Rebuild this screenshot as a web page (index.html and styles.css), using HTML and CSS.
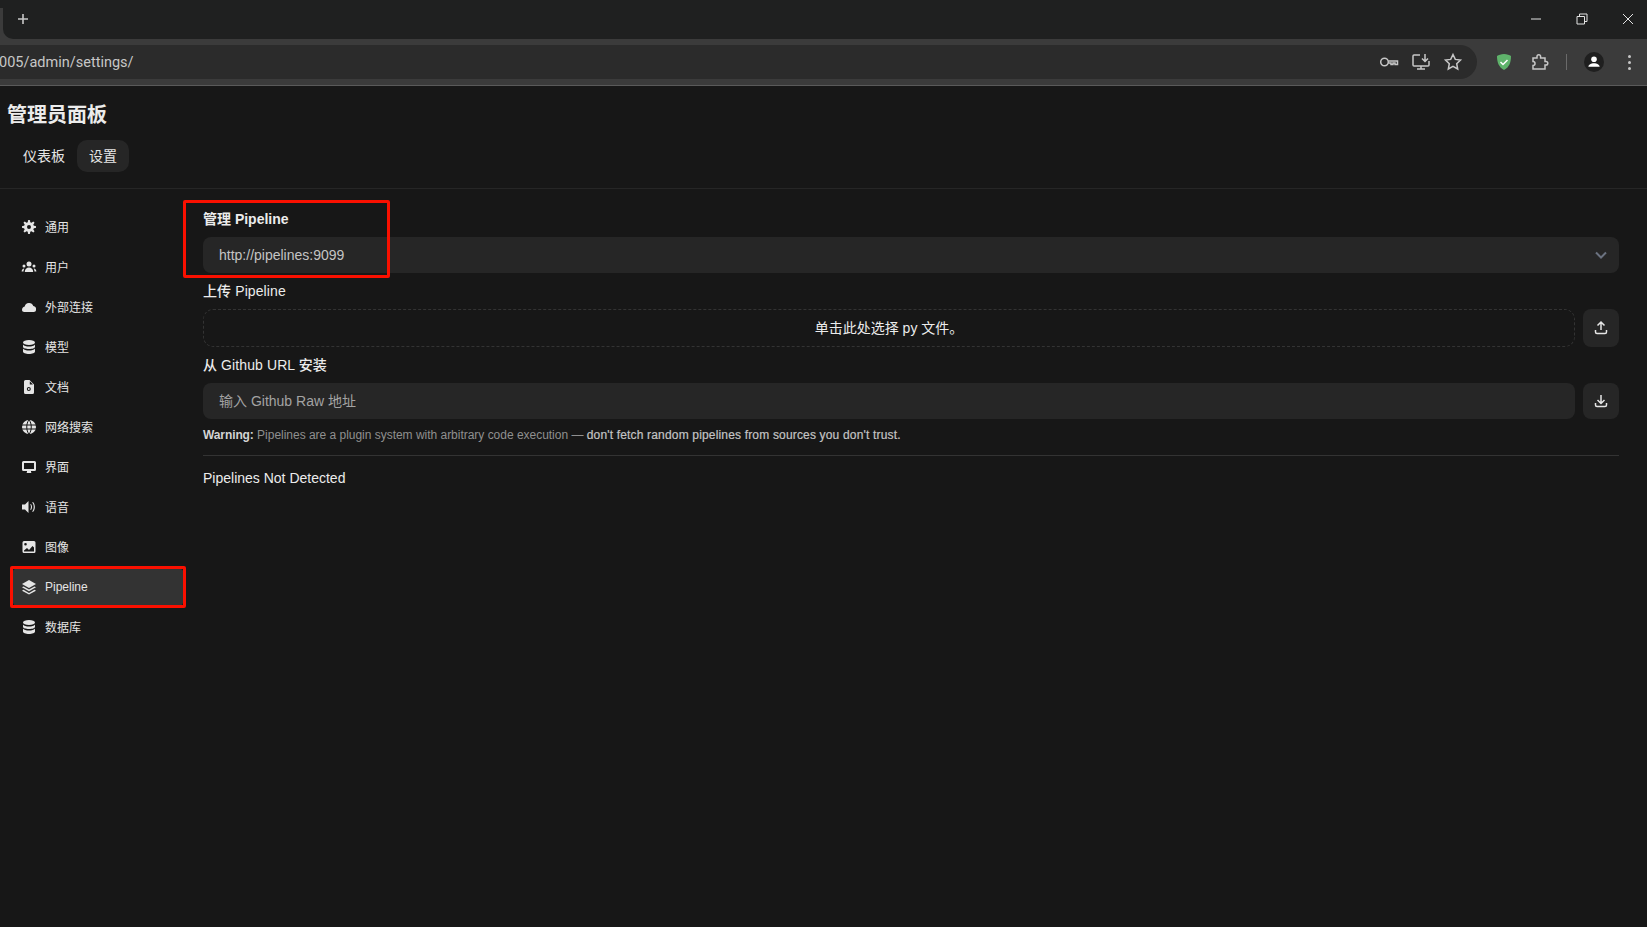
FILE: index.html
```html
<!DOCTYPE html>
<html lang="zh-CN">
<head>
  <meta charset="UTF-8">
  <title>管理员面板</title>
  <link rel="stylesheet" href="styles.css">
</head>
<body>
  <!-- browser frame -->
  <div class="tabstrip">
    <div class="tab-edge"></div>
    <svg class="new-tab" viewBox="0 0 12 12"><path d="M6 1v10M1 6h10"/></svg>
    <div class="win-buttons">
      <svg viewBox="0 0 12 12"><path d="M1 6h10"/></svg>
      <svg viewBox="0 0 12 12"><path d="M1 3.500h7.500V11H1zM3.500 3.500V1H11v7.500H8.500"/></svg>
      <svg viewBox="0 0 12 12"><path d="M1 1l10 10M11 1L1 11"/></svg>
    </div>
  </div>
  <div class="toolbar">
    <div class="omnibox">
      <span class="url">005/admin/settings/</span>
      <svg class="omni-icon" viewBox="0 0 20 20"><circle cx="5.500" cy="10" r="3.800"/><path d="M9.300 9h9.200v3.500H16V11h-2v1.500h-2V11H9.300"/></svg>
      <svg class="omni-icon" viewBox="0 0 20 20"><path d="M9 3H3a1 1 0 0 0-1 1v9a1 1 0 0 0 1 1h14a1 1 0 0 0 1-1V9M6 17h8M10 14v3M14 2v7M11 6.500L14 9.500l3-3"/></svg>
      <svg class="omni-icon" viewBox="0 0 20 20"><path d="M10 2.500l2.300 4.900 5.200.7-3.800 3.600 1 5.300-4.700-2.600-4.700 2.600 1-5.300-3.800-3.600 5.200-.7z"/></svg>
    </div>
    <div class="ext-icons">
      <svg class="shield" viewBox="0 0 18 18"><path d="M9 1c3 0 5.500 1 7 2 0 6-1.500 11-7 14C3.500 14 2 9 2 3c1.500-1 4-2 7-2z" fill="#5fb36b"/><path d="M5.500 9l2.500 2.500 4.500-4.500" fill="none" stroke="#fff" stroke-width="1.500"/></svg>
      <svg class="puzzle" viewBox="0 0 18 18"><path d="M2 5h4V3.500a1.800 1.800 0 0 1 3.600 0V5H14v3.500h1a1.800 1.800 0 0 1 0 3.600h-1V16H2v-3.500a2 2 0 0 0 0-4z"/></svg>
      <span class="tool-sep"></span>
      <span class="avatar"><svg viewBox="0 0 20 20"><circle cx="10" cy="6.500" r="3.500"/><path d="M3 16c0-3 3.500-4.500 7-4.500s7 1.500 7 4.500z"/></svg></span>
      <span class="dots"><i></i><i></i><i></i></span>
    </div>
  </div>

  <div class="page">
    <header class="page-head">
      <h1>管理员面板</h1>
      <nav class="top-tabs">
        <span class="top-tab">仪表板</span>
        <span class="top-tab active">设置</span>
      </nav>
    </header>

    <div class="settings">
      <aside class="sidebar">
        <a class="side-item">
          <svg viewBox="0 0 16 16"><path fill-rule="evenodd" d="M6.955 1.450A.5.5 0 0 1 7.452 1h1.096a.5.5 0 0 1 .497.45l.17 1.699c.484.12.94.312 1.356.562l1.321-1.081a.5.5 0 0 1 .67.033l.774.775a.5.5 0 0 1 .034.67l-1.080 1.320c.25.417.44.873.561 1.357l1.699.17a.5.5 0 0 1 .45.497v1.096a.5.5 0 0 1-.45.497l-1.699.17c-.12.484-.312.94-.562 1.356l1.082 1.322a.5.5 0 0 1-.034.67l-.774.774a.5.5 0 0 1-.67.033l-1.322-1.080c-.416.25-.872.44-1.356.561l-.17 1.699a.5.5 0 0 1-.497.45H7.452a.5.5 0 0 1-.497-.45l-.17-1.699a4.973 4.973 0 0 1-1.356-.562L4.108 13.370a.5.5 0 0 1-.67-.033l-.774-.775a.5.5 0 0 1-.034-.67l1.080-1.320a4.971 4.971 0 0 1-.561-1.357l-1.699-.17A.5.5 0 0 1 1 8.548V7.452a.5.5 0 0 1 .45-.497l1.699-.17c.12-.484.312-.94.562-1.356L2.629 4.107a.5.5 0 0 1 .034-.67l.774-.774a.5.5 0 0 1 .67-.033L5.430 3.710a4.970 4.970 0 0 1 1.356-.561l.17-1.699ZM6 8a2 2 0 1 0 4 0 2 2 0 0 0-4 0Z"/></svg>
          通用
        </a>
        <a class="side-item">
          <svg viewBox="0 0 16 16"><circle cx="8" cy="5" r="2.500"/><circle cx="3" cy="7" r="1.500"/><circle cx="13" cy="7" r="1.500"/><path d="M3.800 13c0-2.800 1.900-4.500 4.200-4.500s4.200 1.700 4.200 4.500zM.6 12.500c0-1.700 1-3 2.700-3.100-.5.900-.8 2-.8 3.100zM15.400 12.500c0-1.700-1-3-2.700-3.100.5.900.8 2 .8 3.100z"/></svg>
          用户
        </a>
        <a class="side-item">
          <svg viewBox="0 0 16 16"><path d="M1 11a3.500 3.500 0 0 1 2.700-3.400 4.500 4.500 0 0 1 8.600-.6 3.500 3.500 0 0 1 2.700 4c0 1.200-1 2-2.200 2H3.200C2 13 1 12.200 1 11z"/></svg>
          外部连接
        </a>
        <a class="side-item">
          <svg viewBox="0 0 16 16"><ellipse cx="8" cy="3.500" rx="6" ry="2.500"/><path d="M2 5.500v2.200C2 9 4.700 10 8 10s6-1 6-2.300V5.500C13 6.900 10.700 7.500 8 7.500S3 6.900 2 5.500zM2 9.500v3C2 13.900 4.700 15 8 15s6-1.100 6-2.500v-3C13 10.900 10.700 11.500 8 11.500S3 10.900 2 9.500z"/></svg>
          模型
        </a>
        <a class="side-item">
          <svg viewBox="0 0 16 16"><path fill-rule="evenodd" d="M3 2.500A1.500 1.500 0 0 1 4.500 1h4L13 5.500v8a1.500 1.500 0 0 1-1.500 1.500h-7A1.500 1.500 0 0 1 3 13.500zM5.800 10a2 2 0 1 0 4 0 2 2 0 0 0-4 0zM6.900 10a.9.9 0 1 1 1.800 0 .9.9 0 0 1-1.800 0zM8.800 2.200v3.200H12z"/></svg>
          文档
        </a>
        <a class="side-item">
          <svg viewBox="0 0 16 16"><circle cx="8" cy="8" r="7"/><path class="cut" d="M1 6h14M1 10h14M8 1C5 4 5 12 8 15M8 1c3 3 3 11 0 14"/></svg>
          网络搜索
        </a>
        <a class="side-item">
          <svg viewBox="0 0 16 16"><path fill-rule="evenodd" d="M2.500 2h11A1.500 1.500 0 0 1 15 3.500v7a1.500 1.500 0 0 1-1.500 1.500H10v1.500l1 .5H5l1-.5V12H2.500A1.500 1.500 0 0 1 1 10.500v-7A1.500 1.500 0 0 1 2.500 2zM3 4v6h10V4z"/></svg>
          界面
        </a>
        <a class="side-item">
          <svg viewBox="0 0 16 16"><path d="M7.500 2v12L4 10.500H1v-5h3zM10 5c1.400 1.600 1.400 4.400 0 6l-.8-.6c1-1.300 1-3.500 0-4.800zM12 3c2.500 2.700 2.500 7.300 0 10l-.8-.6c2-2.300 2-6.500 0-8.800z"/></svg>
          语音
        </a>
        <a class="side-item">
          <svg viewBox="0 0 16 16"><path fill-rule="evenodd" d="M3 2h10a1.500 1.500 0 0 1 1.500 1.500v9A1.500 1.500 0 0 1 13 14H3a1.500 1.500 0 0 1-1.500-1.500v-9A1.500 1.500 0 0 1 3 2zM3 11.500v1h10V8.500l-1.500-1.500-3.500 4-2-2zM4.500 6.500a1.300 1.300 0 1 0 0-2.600 1.300 1.300 0 0 0 0 2.600z"/></svg>
          图像
        </a>
        <a class="side-item active">
          <svg viewBox="0 0 16 16"><path d="M8 1l7 4-7 4-7-4zM2.500 7.500L8 10.600l5.500-3.100L15 8.300l-7 4-7-4zM2.500 10.800L8 13.900l5.500-3.100 1.500.9-7 3.800-7-3.800z"/></svg>
          Pipeline
          <span class="mark mark-side"></span>
        </a>
        <a class="side-item">
          <svg viewBox="0 0 16 16"><ellipse cx="8" cy="3.500" rx="6" ry="2.500"/><path d="M2 5.500v2.200C2 9 4.700 10 8 10s6-1 6-2.300V5.500C13 6.900 10.700 7.500 8 7.500S3 6.900 2 5.500zM2 9.500v3C2 13.900 4.700 15 8 15s6-1.100 6-2.500v-3C13 10.900 10.700 11.500 8 11.500S3 10.900 2 9.500z"/></svg>
          数据库
        </a>
      </aside>

      <main class="content">
        <section class="field first">
          <label class="field-label strong">管理 Pipeline</label>
          <div class="select">
            <span>http://pipelines:9099</span>
            <svg viewBox="0 0 16 16"><path d="M3 5.500l5 5 5-5"/></svg>
          </div>
          <span class="mark mark-field"></span>
        </section>

        <section class="field">
          <label class="field-label">上传 Pipeline</label>
          <div class="row">
            <div class="dropzone">单击此处选择 py 文件。</div>
            <button class="icon-btn">
              <svg viewBox="0 0 16 16"><path d="M8 10V2.500M4.500 5.500L8 2l3.500 3.500M2.500 10v2a1.500 1.500 0 0 0 1.500 1.500h8a1.500 1.500 0 0 0 1.500-1.500v-2"/></svg>
            </button>
          </div>
        </section>

        <section class="field">
          <label class="field-label">从 Github URL 安装</label>
          <div class="row">
            <div class="text-input">输入 Github Raw 地址</div>
            <button class="icon-btn">
              <svg viewBox="0 0 16 16"><path d="M8 2v8M4.500 7L8 10.500 11.500 7M2.500 10v2a1.500 1.500 0 0 0 1.500 1.500h8a1.500 1.500 0 0 0 1.500-1.500v-2"/></svg>
            </button>
          </div>
          <p class="warning"><b>Warning:</b> <span>Pipelines are a plugin system with arbitrary code execution —</span> <em>don't fetch random pipelines from sources you don't trust.</em></p>
        </section>

        <hr class="rule">
        <div class="empty">Pipelines Not Detected</div>
      </main>
    </div>
  </div>
</body>
</html>
```

FILE: styles.css
```css
* {
  box-sizing: border-box;
}
html, body {
  height: 100%;
}
body {
  margin: 0;
  overflow: hidden;
  background-color: #171717;
  color: #ececec;
  font-family: "Liberation Sans", "Noto Sans CJK SC", sans-serif;
  display: flex;
  flex-direction: column;
}
svg {
  display: block;
}

/* browser frame */
.tabstrip {
  height: 39px;
  background-color: #1f2020;
  display: flex;
  align-items: center;
  flex-shrink: 0;
}
.tab-edge {
  width: 17px;
  height: 39px;
  background: linear-gradient(#1f2020 8px, #3b3b3b 8px);
}
.tab-edge::after {
  content: "";
  display: block;
  height: 39px;
  margin-left: 3px;
  background-color: #1f2020;
  border-bottom-left-radius: 10px;
}
.new-tab {
  width: 12px;
  height: 12px;
  margin-bottom: 2px;
  fill: none;
  stroke: #c7c7c7;
  stroke-width: 1.6;
}
.win-buttons {
  margin-left: auto;
  display: flex;
  gap: 34px;
  padding-right: 13px;
  margin-bottom: 2px;
}
.win-buttons svg {
  width: 12px;
  height: 12px;
  fill: none;
  stroke: #e3e3e3;
  stroke-width: 1;
}
.toolbar {
  height: 47px;
  padding-top: 6px;
  background-color: #3b3b3b;
  border-bottom: 1px solid #5a5a5a;
  display: flex;
  flex-shrink: 0;
}
.omnibox {
  width: 1477px;
  height: 34px;
  background-color: #2b2b2b;
  border-radius: 0 17px 17px 0;
  display: flex;
  align-items: center;
  padding-right: 14px;
}
.url {
  margin-left: -1px;
  margin-right: auto;
  font-family: "Roboto", sans-serif;
  font-size: 14.5px;
  color: #c7c7c7;
}
.omni-icon {
  width: 20px;
  height: 20px;
  margin-left: 12px;
  fill: none;
  stroke: #c7c7c7;
  stroke-width: 1.5;
}
.ext-icons {
  height: 34px;
  display: flex;
  align-items: center;
  flex: 1;
  padding-left: 18px;
}
.shield {
  width: 18px;
  height: 18px;
}
.puzzle {
  width: 18px;
  height: 18px;
  margin-left: 18px;
  fill: none;
  stroke: #c7c7c7;
  stroke-width: 1.5;
}
.tool-sep {
  width: 1px;
  height: 16px;
  margin-left: 17px;
  background-color: #6a6a6a;
}
.avatar {
  width: 20px;
  height: 20px;
  margin-left: 17px;
  border-radius: 50%;
  background-color: #1f1f1f;
  display: flex;
  align-items: center;
  justify-content: center;
}
.avatar svg {
  width: 16px;
  height: 16px;
  fill: #fff;
}
.dots {
  margin-left: 24px;
  display: flex;
  flex-direction: column;
  gap: 3px;
}
.dots i {
  width: 3px;
  height: 3px;
  border-radius: 50%;
  background-color: #c7c7c7;
}

/* page */
.page {
  flex: 1;
  display: flex;
  flex-direction: column;
}
.page-head {
  height: 103px;
  flex-shrink: 0;
  padding: 17px 0 0 7px;
  border-bottom: 1px solid #262626;
}
h1 {
  margin: 0;
  font-size: 20px;
  line-height: 24px;
  font-weight: 700;
  color: #ececec;
}
.top-tabs {
  margin-top: 13px;
  display: flex;
}
.top-tab {
  height: 32px;
  padding: 0 12px;
  border-radius: 10px;
  font-size: 14px;
  line-height: 32px;
  color: #e5e5e5;
}
.top-tab:first-child {
  margin-left: 4px;
}
.top-tab.active {
  background-color: #262626;
}

.settings {
  flex: 1;
  display: flex;
}
.sidebar {
  width: 203px;
  flex-shrink: 0;
  padding: 19px 19px 0 12px;
  display: flex;
  flex-direction: column;
  gap: 2px;
}
.side-item {
  position: relative;
  height: 38px;
  padding: 0 0 2px 9px;
  display: flex;
  align-items: center;
  gap: 8px;
  font-size: 12px;
  color: #e5e5e5;
  border-radius: 6px;
}
.side-item svg {
  width: 16px;
  height: 16px;
  margin-top: 2px;
  fill: #e5e5e5;
  flex-shrink: 0;
}
.side-item svg .cut {
  fill: none;
  stroke: #171717;
  stroke-width: 1;
}
.side-item.active {
  padding-bottom: 0;
  background-color: #333333;
}
.side-item.active svg {
  margin-top: 0;
}

/* red annotation boxes drawn on the screenshot */
.mark {
  position: absolute;
  border: 3px solid #fa1000;
  border-radius: 2px;
  pointer-events: none;
}
.mark-side {
  left: -2px;
  right: -2px;
  top: -2px;
  bottom: -2px;
}
.mark-field {
  left: -20px;
  top: -9px;
  width: 207px;
  height: 78px;
}

.content {
  flex: 1;
  padding: 20px 28px 0 0;
}
.field {
  position: relative;
  margin-bottom: 8px;
}
.field-label {
  display: block;
  font-size: 14px;
  line-height: 20px;
  font-weight: 500;
  letter-spacing: 0.1px;
  color: #ececec;
}
.field-label.strong {
  font-weight: 700;
  letter-spacing: 0;
}
.select {
  margin-top: 8px;
  height: 36px;
  padding: 0 10px 0 16px;
  border-radius: 8px;
  background-color: #262626;
  display: flex;
  align-items: center;
  justify-content: space-between;
  font-size: 14px;
  color: #c4c4c4;
}
.select svg {
  width: 16px;
  height: 16px;
  fill: none;
  stroke: #6b7280;
  stroke-width: 2;
}
.row {
  margin-top: 8px;
  display: flex;
  gap: 8px;
}
.dropzone, .text-input {
  flex: 1;
  font-size: 14px;
  border-radius: 8px;
  display: flex;
  align-items: center;
  padding-bottom: 2px;
}
.dropzone {
  height: 38px;
  justify-content: center;
  border: 1px dashed #333333;
  border-radius: 10px;
  color: #ececec;
}
.text-input {
  height: 36px;
  padding-left: 16px;
  background-color: #262626;
  color: #a3a3a3;
}
.icon-btn {
  width: 36px;
  padding: 0;
  border: 0;
  border-radius: 8px;
  background-color: #262626;
  display: flex;
  align-items: center;
  justify-content: center;
}
.icon-btn svg {
  width: 16px;
  height: 16px;
  fill: none;
  stroke: #e5e5e5;
  stroke-width: 1.5;
}
.warning {
  margin: 8px 0 0;
  font-size: 12px;
  line-height: 16px;
  color: #8f8f8f;
}
.warning b {
  letter-spacing: -0.1px;
  color: #d4d4d4;
}
.warning span {
  letter-spacing: -0.02px;
}
.warning em {
  font-style: normal;
  font-weight: 500;
  letter-spacing: 0.17px;
  -webkit-text-stroke: 0.2px #c4c4c4;
  color: #c4c4c4;
}
.rule {
  margin: 12px 0 0;
  border: 0;
  border-top: 1px solid #333333;
}
.empty {
  margin-top: 12px;
  font-size: 14px;
  line-height: 20px;
  color: #ececec;
}
```
